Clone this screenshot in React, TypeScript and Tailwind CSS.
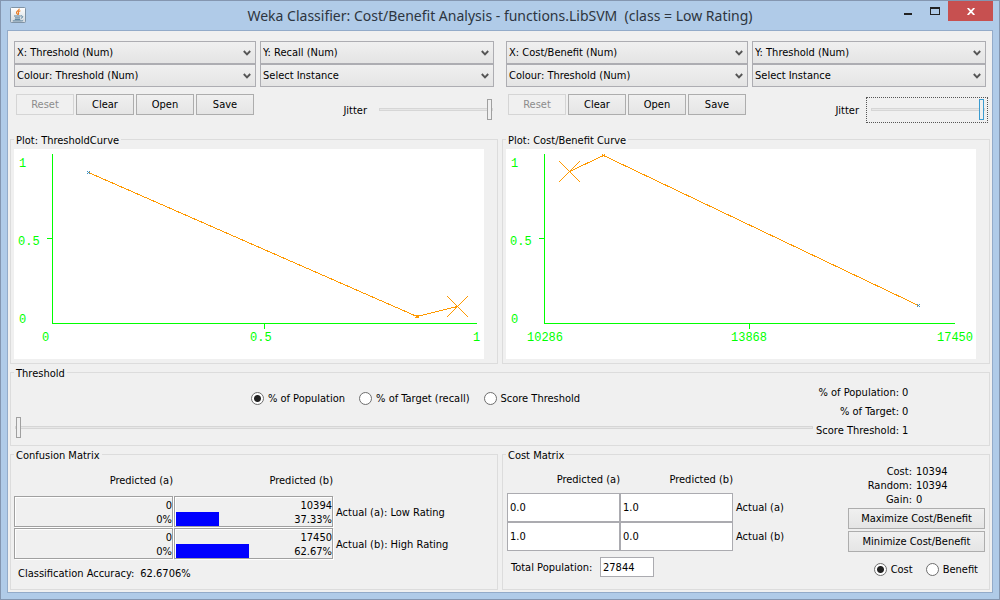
import React, { useId, useState } from "react";

type Point = [number, number];

const FIELDSET = "min-w-0 border border-[#dcdcdc]";
const LEGEND = "px-0.5 pt-0.5 leading-[13px]";
const BUTTON =
  "h-[21px] border border-[#adadad] bg-linear-to-b from-[#f0f0f0] to-[#e5e5e5] text-center leading-[18px] disabled:border-[#d5d5d5] disabled:bg-none disabled:text-[#8c8c8c]";
const TRACK =
  "block h-[21px] w-full appearance-none bg-transparent outline-none [&::-webkit-slider-runnable-track]:h-[3px] [&::-webkit-slider-runnable-track]:border [&::-webkit-slider-runnable-track]:border-[#d6d6d6] [&::-webkit-slider-runnable-track]:bg-[#e7e7e7] [&::-webkit-slider-thumb]:-mt-[10px] [&::-webkit-slider-thumb]:h-[21px] [&::-webkit-slider-thumb]:w-[5px] [&::-webkit-slider-thumb]:appearance-none [&::-webkit-slider-thumb]:border [&::-webkit-slider-thumb]:bg-[#f0f0f0]";

function JavaIcon() {
  return (
    <svg className="size-4" viewBox="0 0 16 16" aria-hidden="true">
      <defs>
        <linearGradient id="java-tile" x1="0" y1="0" x2="0" y2="1">
          <stop offset="0" stopColor="#ffffff" />
          <stop offset="1" stopColor="#d3d9de" />
        </linearGradient>
      </defs>
      <rect x=".5" y=".5" width="15" height="15" rx="1" fill="url(#java-tile)" stroke="#7f93a5" />
      <path d="M9.2 1.6c.5 1.7-2.9 2.4-2.7 4 .1.9 1 1.3 1.1 2.2M10.4 3.7c-1.5.5-2.3 1.2-1.9 2.1.4.8.2 1.3-.4 2" fill="none" stroke="#e8761c" strokeWidth="1.1" />
      <path d="M4 9h6.6M5 10.9h5M4.8 12.4h5.4M2.8 13.9h8.6c1 0 1.6-.3 1.8-.7M10.8 8.9c2.6-.5 2.4 2 .1 2.3" fill="none" stroke="#4d7896" strokeWidth=".95" />
    </svg>
  );
}

function Combo({ label, value }: { label: string; value: string }) {
  return (
    <div className="relative">
      <select
        aria-label={label}
        className="block h-[23px] w-full appearance-none border border-[#adadb2] bg-linear-to-b from-[#f0f0f0] to-[#e4e4e4] pr-5 pl-0.5 text-black"
      >
        <option>{value}</option>
      </select>
      <svg className="pointer-events-none absolute top-[9px] right-[5px] h-[6px] w-2" viewBox="0 0 8 6" aria-hidden="true">
        <path d="M.8 1 4 4.3 7.2 1" fill="none" stroke="#555" strokeWidth="1.9" />
      </svg>
    </div>
  );
}

function Jitter({ focused = false }: { focused?: boolean }) {
  const id = useId();
  const box = "w-[122px] border pt-px pr-0.5 pb-0.5 pl-1";
  return (
    <div className="flex items-center gap-[7px]">
      <label htmlFor={id}>Jitter</label>
      <div className={focused ? `${box} border-dotted border-[#555]` : `${box} border-transparent`}>
        <input
          id={id}
          type="range"
          min={0}
          max={50}
          defaultValue={50}
          className={
            focused
              ? `${TRACK} [&::-webkit-slider-thumb]:border-[#3a9bd0]`
              : `${TRACK} [&::-webkit-slider-thumb]:border-[#a0a0a0]`
          }
        />
      </div>
    </div>
  );
}

interface PlotProps {
  xLabels: [number, string][];
  axisEnd: number;
  tick: number;
  points: Point[];
  selected: number;
  blue: number;
}

function Plot({ xLabels, axisEnd, tick, points, selected, blue }: PlotProps) {
  const [sx, sy] = points[selected];
  return (
    <div className="bg-white">
      <svg
        className="block h-[210px] w-full"
        viewBox="0 0 470 210"
        preserveAspectRatio="xMinYMin meet"
        fontFamily="'Liberation Mono', monospace"
        fontSize="12"
      >
        <path
          d={`M38.5 5V174.5H${axisEnd}M33 89.5H38M${tick + 0.5} 175V180`}
          fill="none"
          stroke="#00ff00"
          shapeRendering="crispEdges"
        />
        <g fill="#00ff00">
          <text x="5" y="18">1</text>
          <text x="4" y="96">0.5</text>
          <text x="5" y="174">0</text>
          {xLabels.map(([x, text]) => (
            <text key={text} x={x} y="192">{text}</text>
          ))}
        </g>
        <g fill="none" stroke="#ff9900" shapeRendering="crispEdges">
          <polyline points={points.map((p) => p.join(",")).join(" ")} />
          {points.map(([x, y], i) => (
            <path key={i} d={`M${x - 1.5} ${y - 1.5}l3 3m0 -3l-3 3`} stroke={i === blue ? "#3a8fc8" : "#ff9900"} />
          ))}
          <path d={`M${sx - 10.5} ${sy - 10.5}l21 21m0 -21l-21 21`} />
        </g>
      </svg>
    </div>
  );
}

interface PlotPanelProps {
  combos: { label: string; value: string }[];
  title: string;
  focused?: boolean;
  plot: PlotProps;
}

function PlotPanel({ combos, title, focused, plot }: PlotPanelProps) {
  return (
    <section className="min-w-0">
      <div className="grid grid-cols-[242fr_234fr] gap-x-1 px-1.5 pt-[10px]">
        {combos.map((c) => (
          <Combo key={c.label} {...c} />
        ))}
      </div>
      <div className="flex h-[45px] items-start justify-between pr-1 pl-2">
        <div className="grid grid-cols-4 gap-0.5 pt-[7px]">
          <button className={`${BUTTON} w-[58px]`} disabled>Reset</button>
          <button className={`${BUTTON} w-[58px]`}>Clear</button>
          <button className={`${BUTTON} w-[58px]`}>Open</button>
          <button className={`${BUTTON} w-[58px]`}>Save</button>
        </div>
        <div className="pt-[10px]">
          <Jitter focused={focused} />
        </div>
      </div>
      <fieldset className={`${FIELDSET} mx-0.5 pt-0.5 pr-[13px] pb-1 pl-[3px]`}>
        <legend className={LEGEND}>{title}</legend>
        <Plot {...plot} />
      </fieldset>
    </section>
  );
}

function Radio({ name, label, checked, onSelect }: { name: string; label: string; checked: boolean; onSelect: () => void }) {
  return (
    <label className="flex items-center gap-1 whitespace-nowrap">
      <input
        type="radio"
        name={name}
        checked={checked}
        onChange={onSelect}
        className="size-[13px] appearance-none rounded-full border border-[#6e6e6e] bg-white checked:bg-[radial-gradient(circle,#222_3px,#fff_4px)]"
      />
      {label}
    </label>
  );
}

function ThresholdPanel() {
  const options = ["% of Population", "% of Target (recall)", "Score Threshold"];
  const [active, setActive] = useState(options[0]);
  const stats = [
    ["% of Population:", "0"],
    ["% of Target:", "0"],
    ["Score Threshold:", "1"],
  ];
  return (
    <fieldset className={`${FIELDSET} mx-0.5 mt-px pt-[3px] pb-1 pl-[3px]`}>
      <legend className={LEGEND}>Threshold</legend>
      <div className="grid grid-cols-[1fr_174px]">
        <div className="min-w-0">
          <div className="flex h-[30px] items-center justify-center gap-[14px] pl-0.5">
            {options.map((o) => (
              <Radio key={o} name="threshold" label={o} checked={active === o} onSelect={() => setActive(o)} />
            ))}
          </div>
          <div className="flex h-7 items-center pr-0.5 pl-px">
            <input
              type="range"
              aria-label="Threshold"
              defaultValue={0}
              className={`${TRACK} [&::-webkit-slider-thumb]:border-[#a0a0a0]`}
            />
          </div>
        </div>
        <dl className="grid grid-cols-[84px_1fr] content-start gap-x-[3px] leading-[19px]">
          {stats.map(([k, v]) => (
            <React.Fragment key={k}>
              <dt className="text-right whitespace-nowrap">{k}</dt>
              <dd>{v}</dd>
            </React.Fragment>
          ))}
        </dl>
      </div>
    </fieldset>
  );
}

function ConfusionCell({ count, percent, bar }: { count: string; percent: string; bar: number }) {
  return (
    <td className="pr-px pb-px">
      <div className="flex h-[31px] w-[159px] justify-between border border-[#a0a0a0] pl-px text-right shadow-[1px_1px_0_#fff,inset_1px_1px_0_#fff]">
        <span className="h-[14px] self-end bg-[#0000ff]" style={{ width: bar }} />
        <span className="pt-0.5 leading-[14px]">
          {count}
          <br />
          {percent}
        </span>
      </div>
    </td>
  );
}

function ConfusionMatrix() {
  return (
    <fieldset className={`${FIELDSET} mx-0.5 pl-[3px]`}>
      <legend className={LEGEND}>Confusion Matrix</legend>
      <table className="border-separate border-spacing-0">
        <thead>
          <tr className="h-[34px]">
            <th scope="col" className="p-0 pt-[3px] pr-px text-right font-normal">Predicted (a)</th>
            <th scope="col" className="p-0 pt-[3px] pr-px text-right font-normal">Predicted (b)</th>
            <td />
          </tr>
        </thead>
        <tbody>
          <tr>
            <ConfusionCell count="0" percent="0%" bar={0} />
            <ConfusionCell count="10394" percent="37.33%" bar={43} />
            <th scope="row" className="p-0 pl-0.5 text-left font-normal whitespace-nowrap">Actual (a): Low Rating</th>
          </tr>
          <tr>
            <ConfusionCell count="0" percent="0%" bar={0} />
            <ConfusionCell count="17450" percent="62.67%" bar={73} />
            <th scope="row" className="p-0 pl-0.5 text-left font-normal whitespace-nowrap">Actual (b): High Rating</th>
          </tr>
        </tbody>
      </table>
      <p className="flex gap-1.5 pt-[7px] pl-1 leading-[14px]">
        <span>Classification Accuracy:</span>
        <span>62.6706%</span>
      </p>
    </fieldset>
  );
}

function CostMatrix() {
  const [mode, setMode] = useState("Cost");
  const rows = [
    { label: "Actual (a)", values: ["0.0", "1.0"] },
    { label: "Actual (b)", values: ["1.0", "0.0"] },
  ];
  const totals = [
    ["Cost:", "10394"],
    ["Random:", "10394"],
    ["Gain:", "0"],
  ];
  return (
    <fieldset className={`${FIELDSET} mx-0.5 px-1`}>
      <legend className={`${LEGEND} -ml-px`}>Cost Matrix</legend>
      <div className="flex items-start justify-between">
        <div>
          <table className="border-separate border-spacing-0">
            <thead>
              <tr className="h-[31px]">
                <th scope="col" className="p-0 pt-[3px] text-right font-normal">Predicted (a)</th>
                <th scope="col" className="p-0 pt-[3px] text-right font-normal">Predicted (b)</th>
                <td />
              </tr>
            </thead>
            <tbody>
              {rows.map((r) => (
                <tr key={r.label}>
                  {r.values.map((v, i) => (
                    <td key={i} className="p-0">
                      <input
                        aria-label={`${r.label}, column ${i + 1}`}
                        defaultValue={v}
                        className="block h-[29px] w-[113px] border border-[#ababb0] bg-white pl-0.5"
                      />
                    </td>
                  ))}
                  <th scope="row" className="p-0 pl-[3px] text-left font-normal whitespace-nowrap">{r.label}</th>
                </tr>
              ))}
            </tbody>
          </table>
          <div className="flex items-center gap-2 pt-1.5 pl-1">
            <label htmlFor="population" className="w-[81px] whitespace-nowrap">Total Population:</label>
            <input id="population" defaultValue="27844" className="h-5 w-[54px] border border-[#ababb0] bg-white pl-0.5" />
          </div>
        </div>
        <div className="w-[137px] pt-[3px]">
          <dl className="grid grid-cols-[64px_1fr] gap-x-1 leading-[14px]">
            {totals.map(([k, v]) => (
              <React.Fragment key={k}>
                <dt className="text-right">{k}</dt>
                <dd>{v}</dd>
              </React.Fragment>
            ))}
          </dl>
          <div className="grid gap-0.5 pt-px">
            <button className={BUTTON}>Maximize Cost/Benefit</button>
            <button className={BUTTON}>Minimize Cost/Benefit</button>
          </div>
          <div className="flex justify-end gap-[13px] pt-[11px] pr-[7px]">
            <Radio name="mode" label="Cost" checked={mode === "Cost"} onSelect={() => setMode("Cost")} />
            <Radio name="mode" label="Benefit" checked={mode === "Benefit"} onSelect={() => setMode("Benefit")} />
          </div>
        </div>
      </div>
    </fieldset>
  );
}

function TitleBar() {
  return (
    <header className="flex h-[29px] items-start">
      <div className="flex w-[136px] shrink-0 pt-1.5 pl-[9px]">
        <JavaIcon />
      </div>
      <h1 className="min-w-0 flex-1 text-center font-['Noto_Sans',sans-serif] text-[14px] leading-[29px] whitespace-pre text-[#2d3540]">
        {"Weka Classifier: Cost/Benefit Analysis - functions.LibSVM  (class = Low Rating)"}
      </h1>
      <div className="flex w-[136px] shrink-0 justify-end pr-1.5">
        <button aria-label="Minimize" className="flex h-5 w-[27px] items-end justify-center pb-[6px]">
          <span className="h-0.5 w-2 bg-[#222]" />
        </button>
        <button aria-label="Maximize" className="flex h-5 w-[27px] items-center justify-center">
          <span className="h-2 w-[10px] border border-t-2 border-[#222]" />
        </button>
        <button aria-label="Close" className="flex h-5 w-[45px] items-center justify-center bg-[#c75050]">
          <svg className="h-[7px] w-2" viewBox="0 0 8 7" aria-hidden="true">
            <path d="M.7 0 7.3 7M7.3 0 .7 7" stroke="#fff" strokeWidth="1.8" />
          </svg>
        </button>
      </div>
    </header>
  );
}

export default function App() {
  return (
    <div className="flex min-h-screen flex-col border border-[#8496b0] bg-[#b0cbe8] font-['DejaVu_Sans_Condensed','DejaVu_Sans',sans-serif] text-[11px] leading-[13px] text-black">
      <TitleBar />
      <main className="mx-1.5 mb-1.5 flex flex-1 flex-col border border-[#93abc9] bg-[#f0f0f0] pb-0.5">
        <div className="grid grid-cols-2">
          <PlotPanel
            title="Plot: ThresholdCurve"
            combos={[
              { label: "X axis", value: "X: Threshold (Num)" },
              { label: "Y axis", value: "Y: Recall (Num)" },
              { label: "Colour", value: "Colour: Threshold (Num)" },
              { label: "Instance", value: "Select Instance" },
            ]}
            plot={{
              xLabels: [[28, "0"], [236, "0.5"], [459, "1"]],
              axisEnd: 463,
              tick: 250,
              points: [[74.5, 23.5], [403, 167.5], [443.5, 157.5]],
              selected: 2,
              blue: 0,
            }}
          />
          <PlotPanel
            title="Plot: Cost/Benefit Curve"
            focused
            combos={[
              { label: "X axis", value: "X: Cost/Benefit (Num)" },
              { label: "Y axis", value: "Y: Threshold (Num)" },
              { label: "Colour", value: "Colour: Threshold (Num)" },
              { label: "Instance", value: "Select Instance" },
            ]}
            plot={{
              xLabels: [[21, "10286"], [225, "13868"], [431, "17450"]],
              axisEnd: 449,
              tick: 243,
              points: [[63.5, 22.5], [97.5, 6.5], [412.5, 156.5]],
              selected: 0,
              blue: 2,
            }}
          />
        </div>
        <ThresholdPanel />
        <div className="mt-px grid flex-1 grid-cols-2">
          <ConfusionMatrix />
          <CostMatrix />
        </div>
      </main>
    </div>
  );
}
